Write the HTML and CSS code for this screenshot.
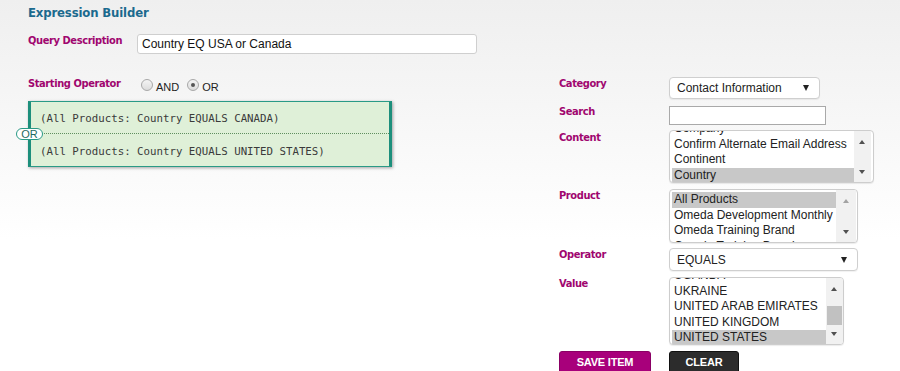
FILE: index.html
```html
<!DOCTYPE html>
<html>
<head>
<meta charset="utf-8">
<link rel="stylesheet" href="styles.css">
</head>
<body>
<div class="page">
  <h1 class="title">Expression Builder</h1>
  <div class="desc-row">
    <span class="lbl desc-lbl">Query Description</span>
    <div class="textbox">Country EQ USA or Canada</div>
  </div>
  <div class="main">
    <div class="left">
      <div class="op-row">
        <span class="lbl op-lbl">Starting Operator</span>
        <span class="radio"></span><span class="radio-text">AND</span>
        <span class="radio checked"></span><span class="radio-text">OR</span>
      </div>
      <div class="expr">
        <div class="expr-item first">(All Products: Country EQUALS CANADA)</div>
        <div class="expr-item">(All Products: Country EQUALS UNITED STATES)</div>
        <span class="or-pill">OR</span>
      </div>
    </div>
    <div class="right">
      <span class="lbl">Category</span>
      <div class="select sel-cat"><span>Contact Information</span><i class="caret"></i></div>

      <span class="lbl">Search</span>
      <div class="search"></div>

      <span class="lbl">Content</span>
      <div class="listbox lb-content">
        <div class="items"><div class="inner off-content">
          <div class="opt">Company</div>
          <div class="opt">Confirm Alternate Email Address</div>
          <div class="opt">Continent</div>
          <div class="opt sel">Country</div>
        </div></div>
        <div class="sb"><i class="up"></i><i class="down"></i></div>
      </div>

      <span class="lbl">Product</span>
      <div class="listbox lb-product">
        <div class="items"><div class="inner off-product">
          <div class="opt sel">All Products</div>
          <div class="opt">Omeda Development Monthly</div>
          <div class="opt">Omeda Training Brand</div>
          <div class="opt">Omeda Training Brand</div>
        </div></div>
        <div class="sb"><i class="up dis"></i><i class="down"></i></div>
      </div>

      <span class="lbl">Operator</span>
      <div class="select sel-op"><span>EQUALS</span><i class="caret"></i></div>

      <span class="lbl">Value</span>
      <div class="listbox lb-value">
        <div class="items"><div class="inner off-value">
          <div class="opt">UGANDA</div>
          <div class="opt">UKRAINE</div>
          <div class="opt">UNITED ARAB EMIRATES</div>
          <div class="opt">UNITED KINGDOM</div>
          <div class="opt sel">UNITED STATES</div>
        </div></div>
        <div class="sb"><i class="up"></i><span class="thumb"></span><i class="down"></i></div>
      </div>

      <div class="btn save">SAVE ITEM</div>
      <div class="btn clear">CLEAR</div>
    </div>
  </div>
</div>
</body>
</html>
```

FILE: styles.css
```css
html, body {
  margin: 0;
  height: 100%;
  overflow: hidden;
}
body {
  background: linear-gradient(to bottom, #efefef 0px, #f7f7f7 120px, #ffffff 240px);
  font-family: "Liberation Sans", Arial, sans-serif;
  color: #222;
}
.page {
  padding: 5px 0 0 28px;
}
.title {
  margin: 0;
  font-family: "DejaVu Sans Condensed", "DejaVu Sans", sans-serif;
  font-stretch: condensed;
  font-weight: bold;
  font-size: 13px;
  line-height: 16px;
  letter-spacing: -0.15px;
  color: #1b6a8e;
}
.lbl {
  font-family: "DejaVu Sans Condensed", "DejaVu Sans", sans-serif;
  font-stretch: condensed;
  font-weight: bold;
  font-size: 11px;
  line-height: 13px;
  letter-spacing: -0.4px;
  color: #a0066f;
  display: block;
}
.desc-row {
  display: flex;
  margin-top: 13px;
}
.desc-lbl {
  width: 109px;
}
.textbox {
  width: 334px;
  height: 18px;
  border: 1px solid #cfcfcf;
  border-radius: 3px;
  background: #fff;
  font-size: 12px;
  line-height: 18px;
  padding-left: 4px;
  color: #111;
}
.main {
  display: flex;
  margin-top: 23px;
}
.left {
  width: 531px;
}
.op-row {
  display: flex;
  align-items: flex-start;
  height: 24px;
}
.op-lbl {
  width: 113px;
}
.radio {
  width: 10px;
  height: 10px;
  border: 1px solid #a8a8a8;
  border-radius: 50%;
  background: linear-gradient(#f4f4f4, #dcdcdc);
  margin-top: 2px;
  position: relative;
  flex: none;
}
.radio.checked::after {
  content: "";
  position: absolute;
  left: 3px;
  top: 3px;
  width: 4px;
  height: 4px;
  border-radius: 50%;
  background: #555;
}
.radio-text {
  font-size: 11px;
  line-height: 14px;
  margin: 3px 8px 0 3px;
  color: #222;
}
.expr {
  position: relative;
  width: 358px;
  background: #dff0d8;
  border-top: 1px solid #2a9a86;
  border-bottom: 1px solid #2a9a86;
  border-left: 3px solid #1d8f7c;
  border-right: 3px solid #1d8f7c;
  box-shadow: 1px 1px 3px rgba(0, 0, 0, 0.35);
}
.expr-item {
  font-family: "DejaVu Sans Mono", "Liberation Mono", monospace;
  font-size: 10.75px;
  line-height: 14px;
  padding: 10px 0 7px 9px;
  color: #3a3a3a;
  white-space: nowrap;
}
.expr-item.first {
  border-bottom: 1px dotted #5f8f5f;
}
.expr-item + .expr-item {
  padding-top: 11px;
  padding-bottom: 7px;
}
.or-pill {
  position: absolute;
  left: -15px;
  top: 26px;
  width: 25px;
  height: 10px;
  border: 1px solid #2a9a86;
  border-radius: 6px;
  background: #fff;
  font-size: 11px;
  line-height: 10px;
  text-align: center;
  color: #1f6b60;
}
.right {
  display: grid;
  grid-template-columns: 110px auto;
  row-gap: 6px;
  align-items: start;
  justify-items: start;
}
.select {
  display: flex;
  align-items: center;
  justify-content: space-between;
  box-sizing: border-box;
  border: 1px solid #cfcfcf;
  border-radius: 4px;
  background: #fff;
  font-size: 12px;
  padding: 0 10px 0 7px;
  color: #222;
  box-shadow: 0 1px 1px rgba(0,0,0,0.06);
}
.sel-cat {
  width: 151px;
  height: 22px;
}
.sel-op {
  width: 189px;
  height: 23px;
}
.caret {
  width: 0;
  height: 0;
  border-left: 3.5px solid transparent;
  border-right: 3.5px solid transparent;
  border-top: 6px solid #222;
}
.search {
  box-sizing: border-box;
  width: 157px;
  height: 19px;
  border: 1px solid #a9a9a9;
  background: #fff;
  margin-top: 1px;
}
.listbox {
  display: flex;
  box-sizing: border-box;
  border: 1px solid #cdcdcd;
  border-radius: 4px;
  background: #fff;
  overflow: hidden;
  box-shadow: 0 1px 1px rgba(0,0,0,0.08);
}
.lb-content { width: 205px; height: 53px; margin-top: -1px; }
.lb-product { width: 189px; height: 54px; margin-bottom: -1px; }
.lb-value { width: 175px; height: 68px; }
.items {
  flex: 1;
  overflow: hidden;
  padding: 0 0 0 2px;
}
.inner {
  font-size: 12px;
  line-height: 15.5px;
  color: #222;
}
.off-content { margin-top: -10px; }
.off-product { margin-top: 2px; }
.off-value { margin-top: -10px; }
.opt {
  padding-left: 2px;
  white-space: nowrap;
}
.opt.sel {
  background: #c8c8c8;
}
.sb {
  width: 17px;
  background: #f1f1f1;
  position: relative;
  flex: none;
}
.lb-content .sb { margin-right: 2px; }
.lb-product .sb { margin-right: 1px; width: 20px; }
.sb i {
  position: absolute;
  left: 50%;
  margin-left: -3.5px;
  width: 0;
  height: 0;
  border-left: 3.5px solid transparent;
  border-right: 3.5px solid transparent;
}
.sb .up {
  top: 9px;
  border-bottom: 4px solid #505050;
}
.sb .up.dis {
  border-bottom-color: #a3a3a3;
}
.sb .down {
  bottom: 8px;
  border-top: 4px solid #505050;
}
.thumb {
  position: absolute;
  left: 1px;
  right: 1px;
  top: 28px;
  height: 19px;
  background: #c1c1c1;
}
.btn {
  box-sizing: border-box;
  height: 22px;
  border-radius: 3px 3px 0 0;
  color: #fff;
  font-weight: bold;
  font-size: 11px;
  line-height: 20px;
  text-align: center;
  letter-spacing: -0.2px;
}
.save {
  width: 92px;
  background: #a8007b;
  border: 1px solid #8a0065;
}
.clear {
  width: 70px;
  background: #2c2c2c;
  border: 1px solid #111;
}
```
